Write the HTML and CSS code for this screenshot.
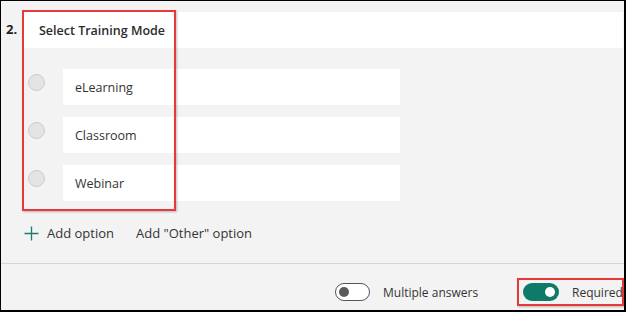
FILE: index.html
```html
<!DOCTYPE html>
<html>
<head>
<meta charset="utf-8">
<link rel="stylesheet" href="styles.css">
</head>
<body>
<div class="frame">
  <div class="head">
    <div class="num">2.</div>
    <div class="title-band">Select Training Mode</div>
  </div>
  <div class="options">
    <div class="option"><span class="radio"></span><div class="field">eLearning</div></div>
    <div class="option"><span class="radio"></span><div class="field">Classroom</div></div>
    <div class="option"><span class="radio"></span><div class="field">Webinar</div></div>
  </div>
  <div class="add-row">
    <span class="add">
      <svg class="plus" width="15" height="15" viewBox="0 0 15 15"><path d="M7.5 0.5V14.5M0.5 7.5H14.5" stroke="#1a7c6c" stroke-width="1.3" fill="none"/></svg>
      Add option
    </span>
    <span class="add-other">Add "Other" option</span>
  </div>
  <div class="separator"></div>
  <div class="footer">
    <span class="toggle off"><span class="knob"></span></span>
    <span class="label label-multi">Multiple answers</span>
    <span class="toggle on"><span class="knob"></span></span>
    <span class="label">Required</span>
  </div>
  <div class="mark mark-options"></div>
  <div class="mark mark-required"></div>
</div>
</body>
</html>
```
FILE: styles.css
```css
html, body {
  margin: 0;
  padding: 0;
  background: #f3f3f3;
}
.frame {
  position: relative;
  width: 626px;
  height: 312px;
  box-sizing: border-box;
  border-style: solid;
  border-color: #000;
  border-width: 1px 2px 2px 1px;
  background: #f3f3f3;
  padding-top: 11px;
  font-family: "Open Sans", "Noto Sans", sans-serif;
  color: #333;
  overflow: hidden;
}
.head {
  display: flex;
  height: 36px;
}
.num {
  width: 18px;
  padding-left: 5px;
  padding-top: 9px;
  font-weight: 700;
  font-size: 13px;
  line-height: 16px;
  color: #222;
}
.title-band {
  flex: 1;
  margin-right: 1px;
  background: #fff;
  display: flex;
  align-items: center;
  padding-left: 15px;
  font-weight: 600;
  font-size: 12.5px;
  color: #2b2b2b;
}
.options {
  margin-top: 21px;
  display: flex;
  flex-direction: column;
  gap: 12px;
}
.option {
  display: flex;
  height: 36px;
}
.radio {
  box-sizing: border-box;
  width: 17px;
  height: 17px;
  margin-left: 27px;
  margin-top: 5px;
  border-radius: 50%;
  background: #e4e4e4;
  border: 1px solid #cbcbcb;
}
.field {
  margin-left: 18px;
  width: 325px;
  padding-left: 12px;
  background: #fff;
  display: flex;
  align-items: center;
  font-size: 12.5px;
  color: #333;
}
.add-row {
  margin-top: 20px;
  height: 24px;
  display: flex;
  align-items: center;
  padding-left: 23px;
  font-size: 13px;
  color: #333;
}
.add {
  display: flex;
  align-items: center;
  gap: 8px;
}
.add-other {
  margin-left: 22px;
}
.separator {
  margin-top: 18px;
  height: 1px;
  background: #d6d6d6;
}
.footer {
  margin-top: 19px;
  height: 18px;
  display: flex;
  align-items: center;
  padding-left: 334px;
  font-size: 12px;
  color: #333;
  white-space: nowrap;
}
.toggle {
  position: relative;
  flex: none;
  box-sizing: border-box;
  width: 35px;
  height: 18px;
  border-radius: 9px;
}
.toggle.off {
  border: 1.5px solid #555;
  background: #fff;
}
.toggle.on {
  background: #0f7a68;
  width: 36px;
}
.knob {
  position: absolute;
  top: 50%;
  width: 10px;
  height: 10px;
  margin-top: -5px;
  border-radius: 50%;
}
.toggle.off .knob {
  left: 3px;
  background: #5a5a5a;
}
.toggle.on .knob {
  right: 4px;
  background: #fff;
}
.label {
  margin-left: 13px;
}
.label-multi {
  width: 140px;
  flex: none;
}
.mark {
  position: absolute;
  border: 2px solid #e5393c;
  box-shadow: 1px 1px 2px rgba(0,0,0,0.25);
}
.mark-options {
  left: 21px;
  top: 9px;
  width: 150px;
  height: 197px;
}
.mark-required {
  left: 516px;
  top: 277px;
  width: 103px;
  height: 24px;
}
```
